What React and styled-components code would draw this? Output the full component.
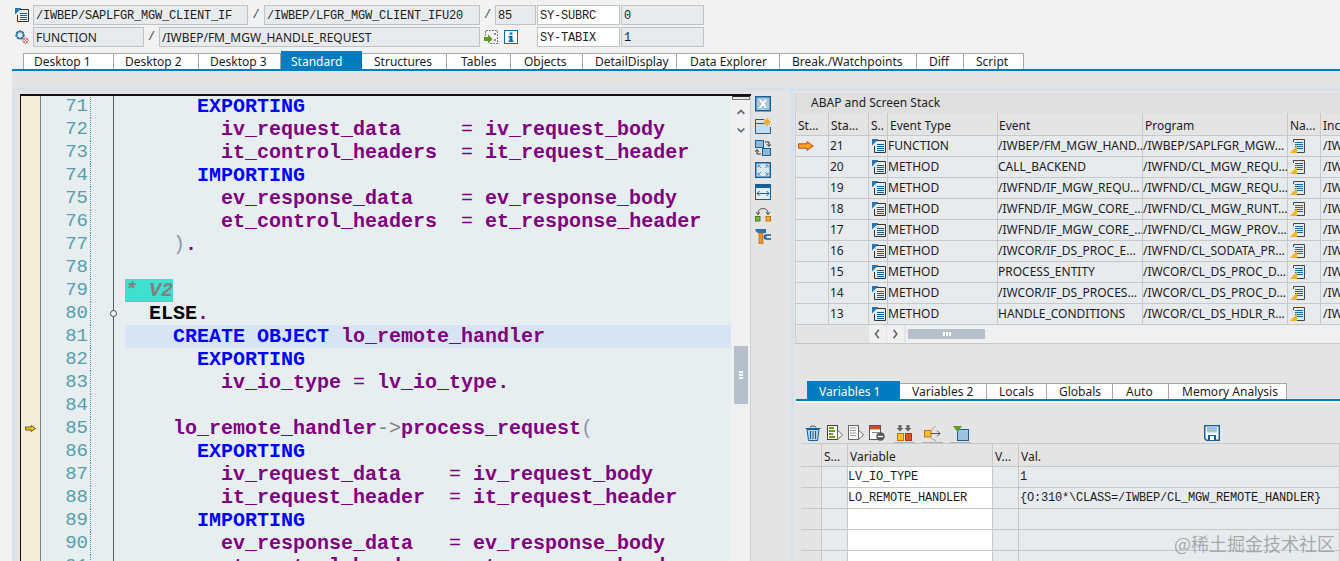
import React from 'react'
import styled, { createGlobalStyle } from 'styled-components'

const uiFont = '"Noto Sans", "Open Sans", sans-serif'
const monoFont = '"Liberation Mono", monospace'

const Global = createGlobalStyle`
  html, body {
    margin: 0;
    padding: 0;
    overflow: hidden;
    background: #f2f2f2;
  }
`

const Page = styled.div`
  position: relative;
  width: 1340px;
  height: 561px;
  overflow: hidden;
  background: #f2f2f2;
  font-family: ${uiFont};
  font-size: 12px;
  color: #1c1c1c;
`

const Header = styled.div`
  height: 48px;
  padding: 5px 0 0 14px;
  box-sizing: border-box;
  display: flex;
  flex-direction: column;
  gap: 2px;
`

const HeaderRow = styled.div`
  display: flex;
  align-items: center;
  height: 20px;
`

const IconSlot = styled.div`
  width: ${p => p.$w || 19}px;
  flex: none;
  box-sizing: border-box;
  padding-left: ${p => p.$pl || 0}px;
  display: flex;
  align-items: center;
`

const Field = styled.div`
  width: ${p => p.$w}px;
  height: 20px;
  flex: none;
  box-sizing: border-box;
  margin-right: ${p => p.$mr || 0}px;
  border: 1px solid #bfc3c6;
  background: ${p => (p.$white ? '#ffffff' : '#e8ebee')};
  padding-left: 2px;
  line-height: ${p => (p.$sans ? 19 : 20)}px;
  white-space: nowrap;
  overflow: hidden;
  font-family: ${p => (p.$sans ? uiFont : monoFont)};
  font-size: 12px;
  letter-spacing: ${p => (p.$sans ? 0 : -0.2)}px;
`

const Slash = styled.div`
  width: ${p => p.$w}px;
  flex: none;
  text-align: center;
  font-family: ${monoFont};
  color: #444;
`

const TabStrip = styled.div`
  height: 23px;
  margin-left: ${p => p.$ml}px;
  padding-left: ${p => p.$pl}px;
  display: flex;
  align-items: flex-end;
  border-bottom: 2px solid #007cc0;
  box-sizing: border-box;
  box-shadow: ${p => (p.$underline ? '0 2px 0 #ffffff' : 'none')};
`

const Tab = styled.div`
  width: ${p => p.$w}px;
  height: ${p => (p.$active ? 18 : 16)}px;
  flex: none;
  box-sizing: border-box;
  padding-left: ${p => p.$pad}px;
  line-height: ${p => (p.$active ? 21 : 16)}px;
  white-space: nowrap;
  background: ${p => (p.$active ? '#007cc0' : '#ffffff')};
  color: ${p => (p.$active ? '#ffffff' : '#1c1c1c')};
  border-top: ${p => (p.$active ? 'none' : '1px solid #a6a6a6')};
  border-right: ${p => (p.$active ? 'none' : '1px solid #a6a6a6')};
  border-left: ${p => (p.$first ? '1px solid #a6a6a6' : 'none')};
`

const Workspace = styled.div`
  margin-left: 12px;
  height: 490px;
  background: #e4e4e4;
  padding-top: 17px;
  box-sizing: border-box;
  display: flex;
`

const LeftPane = styled.div`
  width: 778px;
  flex: none;
  box-sizing: border-box;
  border-top: 3px solid #d6e1ec;
  border-left: 3px solid #d6e1ec;
  padding: 3px 0 0 5px;
  display: flex;
  overflow: hidden;
`

const Editor = styled.div`
  width: 731px;
  height: 470px;
  flex: none;
  box-sizing: border-box;
  border-top: 2px solid #111;
  border-left: 1px solid #111;
  display: flex;
  overflow: hidden;
`

const CodeArea = styled.div`
  width: 710px;
  flex: none;
  background: #e6eef0;
`

const Line = styled.div`
  display: flex;
  height: 23px;
  margin-top: ${p => (p.$first ? -1 : 0)}px;
`

const Marker = styled.div`
  width: 19px;
  flex: none;
  background: #f3ecd9;
  border-right: 1px solid #808080;
  display: flex;
  align-items: center;
  justify-content: center;
`

const LineNo = styled.div`
  width: 50px;
  height: 23px;
  flex: none;
  box-sizing: border-box;
  border-right: 1px dotted #3d9aa6;
  padding-right: 2px;
  text-align: right;
  font-family: ${monoFont};
  font-size: 19px;
  line-height: 23px;
  color: #559fae;
`

const Fold = styled.div`
  position: relative;
  width: 23px;
  flex: none;
  box-sizing: border-box;
  border-right: 1px solid #5a5a5a;
`

const FoldDot = styled.div`
  position: absolute;
  right: -4px;
  top: 8px;
  width: 5px;
  height: 5px;
  border: 1px solid #444;
  border-radius: 50%;
  background: #f3f6f7;
`

const Code = styled.pre`
  flex: 1;
  height: 23px;
  margin: 0 0 0 11px;
  background: ${p => (p.$current ? '#d8e4f3' : 'transparent')};
  font-family: ${monoFont};
  font-size: 20px;
  font-weight: bold;
  line-height: 23px;
`

const Tok = styled.span`
  color: ${p => p.$c};
  font-weight: ${p => (p.$light ? 'normal' : 'bold')};
`

const CommentTok = styled.span`
  display: inline-block;
  height: 23px;
  box-sizing: border-box;
  background: #40e0d0;
  border-bottom: 1px solid #7fb5ae;
  color: #808080;
  font-style: italic;
  line-height: 23px;
`

const ScrollCol = styled.div`
  position: relative;
  flex: 1;
  background: #f0f0f0;
  border-right: 1px solid #cfcfcf;
  display: flex;
  flex-direction: column;
  align-items: center;
`

const Grip = styled.div`
  width: 18px;
  height: 4px;
  flex: none;
  box-sizing: border-box;
  background: #e8e8e8;
  border: 1px solid #777;
  border-top-color: #222;
  margin-bottom: 4px;
`

const ArrowBtn = styled.div`
  height: 18px;
  display: flex;
  align-items: center;
  justify-content: center;
  color: #5d6a75;
`

const VThumb = styled.div`
  position: absolute;
  left: 3px;
  top: 250px;
  width: 14px;
  height: 58px;
  background: #b6c0cb;
  display: flex;
  flex-direction: column;
  align-items: center;
  justify-content: center;
  gap: 1px;
`

const GripDot = styled.i`
  width: 4px;
  height: 2px;
  background: #fff;
`

const ToolCol = styled.div`
  width: 39px;
  flex: none;
  padding: 0 0 0 4px;
  box-sizing: border-box;
  display: flex;
  flex-direction: column;
  gap: 6px;
  margin-top: 2px;
`

const ToolBtn = styled.div`
  width: 17px;
  height: 16px;
`

const RightPane = styled.div`
  flex: 1;
  min-width: 0;
  display: flex;
  flex-direction: column;
`

const StackPanel = styled.div`
  height: 277px;
  flex: none;
  box-sizing: border-box;
  border-left: 4px solid #d6e1ec;
  border-top: 3px solid #d6e1ec;
  padding: 2px 0 0 1px;
`

const StackFrame = styled.div`
  height: 250px;
  border-bottom: 1px solid #c6c6c6;
  border-left: 1px solid #d0d0d0;
  overflow: hidden;
  display: flex;
  flex-direction: column;
`

const PanelTitle = styled.div`
  height: 20px;
  flex: none;
  background: #dfdfdf;
  padding-left: 15px;
  line-height: 20px;
`

const GridRow = styled.div`
  display: grid;
  grid-template-columns: ${p => p.$cols};
  height: ${p => p.$h || 21}px;
  flex: none;
  box-sizing: border-box;
  border-bottom: 1px solid #c8c8c8;
  background: ${p => (p.$head ? '#e4e4e4' : '#e8ebee')};
`

const Cell = styled.div`
  box-sizing: border-box;
  min-width: 0;
  padding-left: ${p => p.$pad ?? 2}px;
  border-right: 1px solid #c8c8c8;
  white-space: nowrap;
  overflow: hidden;
  line-height: ${p => p.$lh || 20}px;
  background: ${p => p.$bg || 'transparent'};
  font-family: ${p => (p.$mono ? monoFont : uiFont)};
  font-size: 12px;
  letter-spacing: ${p => (p.$mono ? -0.2 : 0)}px;
  display: ${p => (p.$icon ? 'flex' : 'block')};
  align-items: center;
`

const HScrollRow = styled.div`
  flex: 1;
  display: flex;
  align-items: center;
  padding-left: 73px;
  gap: 1px;
`

const NavBtn = styled.div`
  width: 17px;
  height: 18px;
  background: #f0f0f0;
  display: flex;
  align-items: center;
  justify-content: center;
  color: #5d6a75;
`

const HTrack = styled.div`
  flex: 1;
  height: 18px;
  margin-left: 1px;
  background: #f0f0f0;
  display: flex;
  align-items: center;
  padding-left: 2px;
`

const HThumb = styled.div`
  width: 77px;
  height: 10px;
  background: #b6c0cb;
  display: flex;
  align-items: center;
  justify-content: center;
  gap: 1px;
`

const HGripDot = styled.i`
  width: 2px;
  height: 4px;
  background: #fff;
`

const VarPanel = styled.div`
  flex: 1;
  min-height: 0;
  box-sizing: border-box;
  border-left: 4px solid #d6e1ec;
  padding-top: 13px;
  position: relative;
`

const VarToolbar = styled.div`
  height: 43px;
  box-sizing: border-box;
  padding: 24px 0 0 4px;
  margin-left: 7px;
  display: flex;
  align-items: flex-start;
  border-bottom: 1px solid #c8c8c8;
`

const VarTool = styled.div`
  width: ${p => (p.$under ? 21 : 16)}px;
  height: ${p => (p.$under ? 18 : 16)}px;
  flex: none;
  box-sizing: border-box;
  margin-right: ${p => p.$mr ?? 5}px;
  border-bottom: ${p => (p.$under ? '1px solid #b0b0b0' : 'none')};
  display: flex;
  justify-content: center;
`

const VarTable = styled.div`
  margin-left: 7px;
  display: flex;
  flex-direction: column;
`

const Watermark = styled.div`
  position: absolute;
  right: 5px;
  bottom: 8px;
  font-family: "Noto Sans CJK SC", sans-serif;
  font-size: 18px;
  line-height: 20px;
  color: rgba(110, 110, 110, 0.55);
  white-space: nowrap;
`

const Svg = ({ size = 16, children }) => (
  <svg width={size} height={size} viewBox={`0 0 ${size} ${size}`} fill="none" style={{ display: 'block' }}>
    {children}
  </svg>
)

const ListDoc = () => (
  <Svg size={16}>
    <path d="M3.5 2.5H14.5V14.5H3.5V8" stroke="#333" />
    <path d="M1 1H7.5L1 7.5Z" fill="#2a74ad" />
    <path d="M6 6.5H13M6 8.5H13M6 10.5H13M6 12.5H13" stroke="#14609f" />
  </Svg>
)

const NavDoc = () => (
  <Svg size={15}>
    <path d="M3.5 3V0.5H14.5V13.5H7" stroke="#444" />
    <path d="M5 3.5H13M5 5.5H13M5 7.5H13M7 9.5H13" stroke="#1668ad" />
    <path d="M0 14L7 6.5V14Z" fill="#f5b324" />
  </Svg>
)

const GearDoc = () => (
  <Svg size={16}>
    <circle cx="6" cy="6" r="3.5" stroke="#2a74ad" strokeWidth="2.4" strokeDasharray="2 1" />
    <circle cx="6" cy="6" r="3.8" stroke="#2a74ad" />
    <circle cx="11.5" cy="11.5" r="2.6" fill="#fff" stroke="#d9534f" />
    <path d="M10.2 10.2L12.8 12.8M12.8 10.2L10.2 12.8" stroke="#d9534f" />
  </Svg>
)

const PasteArrow = () => (
  <Svg size={16}>
    <path d="M2.5 7V1.5H14.5V14.5H6" stroke="#777" strokeDasharray="2 1" />
    <path d="M1 8H5V5.5L9.5 10L5 14.5V12H1Z" fill="#5b9a20" />
    <path d="M11 5H13M11 11H13" stroke="#333" />
  </Svg>
)

const InfoBox = () => (
  <Svg size={16}>
    <rect x="1.5" y="1.5" width="13" height="13" stroke="#0a6db3" fill="#fff" />
    <path d="M6.5 3.5H9.5V5.5H6.5ZM5.5 7H9.5V11.5H10.5V13H5.5V11.5H6.5V8.5H5.5Z" fill="#0a6db3" />
  </Svg>
)

const CloseBox = () => (
  <Svg size={16}>
    <rect x="0.75" y="0.75" width="14.5" height="14" fill="#a9cbe4" stroke="#15609a" strokeWidth="1.5" />
    <path d="M3 3H6L8 5.5L10 3H13L10 7.7L13 12.5H10L8 10L6 12.5H3L6 7.7Z" fill="#fff" stroke="#5b97c4" strokeWidth="0.5" />
  </Svg>
)

const NewPane = () => (
  <Svg size={16}>
    <rect x="1" y="5" width="14" height="10" fill="#c6dcec" />
    <path d="M9 1.5H0.5V15.5H15.5V9" stroke="#15609a" />
    <path d="M1 5.5H9" stroke="#15609a" />
    <circle cx="12" cy="4" r="2.6" fill="#f7a51e" />
    <path d="M12 0V8M8 4H16M9.4 1.4L14.6 6.6M14.6 1.4L9.4 6.6" stroke="#f7a51e" />
  </Svg>
)

const SwapPanes = () => (
  <Svg size={16}>
    <rect x="0.5" y="0.5" width="8" height="7" fill="#8fb9d8" stroke="#15609a" />
    <rect x="7.5" y="8.5" width="8" height="7" fill="#8fb9d8" stroke="#15609a" />
    <path d="M10 2H14V6M12 4.2L14 6.5L16 4.2M6 14H2V10M0 11.8L2 9.5L4 11.8" stroke="#333" />
  </Svg>
)

const Fullscreen = () => (
  <Svg size={16}>
    <rect x="0.75" y="0.75" width="14.5" height="14.5" fill="#dbe9f3" stroke="#15609a" strokeWidth="1.5" />
    <path d="M3 5.5V3H5.5M3 3L6 6M13 5.5V3H10.5M13 3L10 6M3 10.5V13H5.5M3 13L6 10M13 10.5V13H10.5M13 13L10 10" stroke="#4f93c2" />
  </Svg>
)

const WidthPane = () => (
  <Svg size={16}>
    <rect x="0.5" y="0.5" width="15" height="15" fill="#e4eef6" stroke="#15609a" />
    <rect x="1" y="1" width="14" height="3" fill="#15609a" />
    <path d="M2 9.5H14M2 9.5L4.5 7M2 9.5L4.5 12M14 9.5L11.5 7M14 9.5L11.5 12" stroke="#15609a" />
  </Svg>
)

const Headset = () => (
  <Svg size={16}>
    <path d="M3 9V7C3 1 13 1 13 7V9" stroke="#555" />
    <path d="M1 6L3 8.5L5 6M11 6L13 8.5L15 6" stroke="#555" />
    <rect x="0.5" y="10.5" width="4.5" height="4.5" fill="#7cb342" stroke="#4b7d1e" />
    <rect x="11" y="10.5" width="4.5" height="4.5" fill="#f5b324" stroke="#d2691e" />
  </Svg>
)

const Tools = () => (
  <Svg size={16}>
    <path d="M0.5 1H11V5H3L0.5 3Z" fill="#2a74ad" />
    <rect x="4" y="5" width="4" height="11" fill="#f0932b" stroke="#a95f0e" strokeWidth="0.6" />
    <path d="M16 7H11.5C10 7 9.5 8 9.5 9S10 11 11.5 11H16" stroke="#15609a" strokeWidth="1.6" />
    <path d="M9 9H12" stroke="#15609a" />
  </Svg>
)

const Trash = () => (
  <Svg size={16}>
    <path d="M5 2.5C5 .5 11 .5 11 2.5M.5 3.5H15.5M2 4.5L3.5 15.5H12.5L14 4.5Z" stroke="#15609a" fill="#b5d2e8" />
    <path d="M5.5 6V14M8 6V14M10.5 6V14" stroke="#15609a" />
  </Svg>
)

const DocPlay = ({ tone }) => {
  const green = tone === 'green'
  return (
    <Svg size={16}>
      <rect x="0.5" y="0.5" width="10" height="14" fill="#fff" stroke={green ? '#444' : '#666'} />
      <path d={green ? 'M2 3H7M2 6H8M2 9H6M2 12H8' : 'M2 3H8M2 5.5H8M2 8H8M2 10.5H8'} stroke={green ? '#6a9f0b' : '#999'} strokeWidth={green ? 2 : 1} />
      <path d="M10.5 5L15.5 10L10.5 14.5Z" fill="#fff" stroke="#666" />
    </Svg>
  )
}

const RowMinus = () => (
  <Svg size={16}>
    <rect x="0.5" y="0.5" width="11" height="14" fill="#fff" stroke="#555" />
    <rect x="1" y="1" width="10" height="3.5" fill="#d14d1f" />
    <path d="M3 7.5H10" stroke="#888" />
    <circle cx="11.5" cy="11.5" r="4.2" fill="#555" />
    <path d="M9 11.5H14" stroke="#fff" strokeWidth="1.4" />
  </Svg>
)

const SplitBoxes = () => (
  <Svg size={17}>
    <path d="M2.5 0H5.5V3H7.5L4 6.5L.5 3H2.5ZM10.5 0H13.5V3H15.5L12 6.5L8.5 3H10.5Z" fill="#666" />
    <rect x="1.5" y="8.5" width="6" height="7" fill="#f7c325" stroke="#d2691e" />
    <rect x="9.5" y="8.5" width="6" height="7" fill="#d8531f" stroke="#a13a11" />
  </Svg>
)

const BoxArrow = () => (
  <Svg size={17}>
    <rect x="0.5" y="5.5" width="6.5" height="6.5" fill="#f7c325" stroke="#d2691e" />
    <path d="M7 5L12 1M7 13L12 16" stroke="#aaa" />
    <path d="M7 8.5H16M13 5.5L16 8.5L13 11.5" stroke="#555" />
  </Svg>
)

const FilterBox = () => (
  <Svg size={16}>
    <rect x="4.5" y="4.5" width="11" height="11" fill="#9fc3dd" stroke="#15609a" />
    <path d="M0 1H9L4.5 7Z" fill="#5f9f24" />
  </Svg>
)

const Save = () => (
  <Svg size={16}>
    <path d="M1 .75H15.25V15.25H2.5L.75 13.5V1Z" fill="#fff" stroke="#15609a" strokeWidth="1.5" />
    <rect x="3" y="1" width="10" height="6.5" fill="#9fc3dd" />
    <rect x="4" y="10" width="8" height="5" fill="#15609a" />
    <rect x="6" y="11" width="4" height="4" fill="#fff" />
  </Svg>
)

const CurrentArrow = ({ w = 16, h = 10, fill = '#f5a623', line = '#d2421f' }) => (
  <svg width={w} height={h} viewBox="0 0 16 10" style={{ display: 'block' }}>
    <path d="M.5 2.8H9V.6L15.3 5L9 9.4V7.2H.5Z" fill={fill} stroke={line} />
  </svg>
)

const Chevron = ({ dir }) => {
  const d = { up: 'M2 7L6 3L10 7', down: 'M2 3L6 7L10 3', left: 'M7 1L3 6L7 11', right: 'M3 1L7 6L3 11' }[dir]
  return (
    <svg width="10" height="12" viewBox="0 0 12 12" style={{ display: 'block' }}>
      <path d={d} fill="none" stroke="currentColor" strokeWidth="2" />
    </svg>
  )
}

// minimal ABAP colouring, uppercase words are keywords
const highlight = text =>
  text.split(/(->|\b[A-Z]+\b|[a-z_]+|[=.()])/).filter(Boolean).map((part, i) => {
    if (part === 'ELSE') return <Tok key={i} $c="#000">{part}</Tok>
    if (/^[A-Z]+$/.test(part)) return <Tok key={i} $c="#0000ff">{part}</Tok>
    if (part === '->') return <Tok key={i} $c="#808080" $light>{part}</Tok>
    if (part === '(' || part === ')') return <Tok key={i} $c="#8d99a8" $light>{part}</Tok>
    if (part === '=') return <Tok key={i} $c="#800080" $light>{part}</Tok>
    if (/^[a-z_.]+$/.test(part)) return <Tok key={i} $c="#800080">{part}</Tok>
    return part
  })

const codeLines = [
  [71, '      EXPORTING'],
  [72, '        iv_request_data     = iv_request_body'],
  [73, '        it_control_headers  = it_request_header'],
  [74, '      IMPORTING'],
  [75, '        ev_response_data    = ev_response_body'],
  [76, '        et_control_headers  = et_response_header'],
  [77, '    ).'],
  [78, ''],
  [79, null],
  [80, '  ELSE.'],
  [81, '    CREATE OBJECT lo_remote_handler'],
  [82, '      EXPORTING'],
  [83, '        iv_io_type = lv_io_type.'],
  [84, ''],
  [85, '    lo_remote_handler->process_request('],
  [86, '      EXPORTING'],
  [87, '        iv_request_data    = iv_request_body'],
  [88, '        it_request_header  = it_request_header'],
  [89, '      IMPORTING'],
  [90, '        ev_response_data   = ev_response_body'],
  [91, '        et_control_headers = et_response_header']
]

const topTabs = [
  ['Desktop 1', 91, 10], ['Desktop 2', 85, 11], ['Desktop 3', 82, 11], ['Standard', 81, 10, true], ['Structures', 85, 12],
  ['Tables', 64, 14], ['Objects', 72, 13], ['DetailDisplay', 94, 12], ['Data Explorer', 103, 13], ['Break./Watchpoints', 137, 12],
  ['Diff', 47, 12], ['Script', 60, 12]
]

const varTabs = [
  ['Variables 1', 93, 12, true], ['Variables 2', 87, 12], ['Locals', 60, 12], ['Globals', 66, 12], ['Auto', 56, 13], ['Memory Analysis', 118, 13]
]

const stackCols = '33px 40px 19px 110px 145px 145px 33px 40px'
const stackRows = [
  ['21', 'FUNCTION', '/IWBEP/FM_MGW_HAND…', '/IWBEP/SAPLFGR_MGW…', true],
  ['20', 'METHOD', 'CALL_BACKEND', '/IWFND/CL_MGW_REQU…'],
  ['19', 'METHOD', '/IWFND/IF_MGW_REQU…', '/IWFND/CL_MGW_REQU…'],
  ['18', 'METHOD', '/IWFND/IF_MGW_CORE_…', '/IWFND/CL_MGW_RUNT…'],
  ['17', 'METHOD', '/IWFND/IF_MGW_CORE_…', '/IWFND/CL_MGW_PROV…'],
  ['16', 'METHOD', '/IWCOR/IF_DS_PROC_E…', '/IWFND/CL_SODATA_PR…'],
  ['15', 'METHOD', 'PROCESS_ENTITY', '/IWCOR/CL_DS_PROC_D…'],
  ['14', 'METHOD', '/IWCOR/IF_DS_PROCES…', '/IWCOR/CL_DS_PROC_D…'],
  ['13', 'METHOD', 'HANDLE_CONDITIONS', '/IWCOR/CL_DS_HDLR_R…']
]

const varCols = '21px 26px 145px 26px 1fr'
const varRows = [
  ['LV_IO_TYPE', '1'],
  ['LO_REMOTE_HANDLER', '{O:310*\\CLASS=/IWBEP/CL_MGW_REMOTE_HANDLER}'],
  ['', ''],
  ['', ''],
  ['', '']
]

const toolIcons = [CloseBox, NewPane, SwapPanes, Fullscreen, WidthPane, Headset, Tools]

const App = () => (
  <Page>
    <Global />
    <Header>
      <HeaderRow>
        <IconSlot><ListDoc /></IconSlot>
        <Field $w={215}>/IWBEP/SAPLFGR_MGW_CLIENT_IF</Field>
        <Slash $w={16}>/</Slash>
        <Field $w={216}>/IWBEP/LFGR_MGW_CLIENT_IFU20</Field>
        <Slash $w={15}>/</Slash>
        <Field $w={41} $mr={1}>85</Field>
        <Field $w={83} $white $mr={1}>SY-SUBRC</Field>
        <Field $w={83}>0</Field>
      </HeaderRow>
      <HeaderRow>
        <IconSlot><GearDoc /></IconSlot>
        <Field $w={111} $sans>FUNCTION</Field>
        <Slash $w={15}>/</Slash>
        <Field $w={321} $sans>/IWBEP/FM_MGW_HANDLE_REQUEST</Field>
        <IconSlot $w={23} $pl={3}><PasteArrow /></IconSlot>
        <IconSlot $w={34}><InfoBox /></IconSlot>
        <Field $w={83} $white $mr={1}>SY-TABIX</Field>
        <Field $w={83}>1</Field>
      </HeaderRow>
    </Header>
    <TabStrip $ml={12} $pl={11}>
      {topTabs.map(([label, w, pad, active], i) => (
        <Tab key={label} $w={w} $pad={pad} $active={active} $first={i === 0}>{label}</Tab>
      ))}
    </TabStrip>
    <Workspace>
      <LeftPane>
        <Editor>
          <CodeArea>
            {codeLines.map(([no, text], i) => (
              <Line key={no} $first={i === 0}>
                <Marker>{no === 85 && <CurrentArrow w={11} h={9} fill="#f7c600" line="#222" />}</Marker>
                <LineNo>{no}</LineNo>
                <Fold>{no === 80 && <FoldDot />}</Fold>
                <Code $current={no === 81}>
                  {text === null ? <CommentTok>* V2</CommentTok> : highlight(text)}
                </Code>
              </Line>
            ))}
          </CodeArea>
          <ScrollCol>
            <Grip />
            <ArrowBtn><Chevron dir="up" /></ArrowBtn>
            <ArrowBtn><Chevron dir="down" /></ArrowBtn>
            <VThumb><GripDot /><GripDot /><GripDot /></VThumb>
          </ScrollCol>
        </Editor>
        <ToolCol>
          {toolIcons.map((Icon, i) => <ToolBtn key={i}><Icon /></ToolBtn>)}
        </ToolCol>
      </LeftPane>
      <RightPane>
        <StackPanel>
          <StackFrame>
            <PanelTitle>ABAP and Screen Stack</PanelTitle>
            <GridRow $cols={stackCols} $h={23} $head>
              <Cell $lh={25}>St...</Cell>
              <Cell $lh={25}>Sta...</Cell>
              <Cell $lh={25}>S..</Cell>
              <Cell $lh={25}>Event Type</Cell>
              <Cell $lh={25} $pad={1}>Event</Cell>
              <Cell $lh={25}>Program</Cell>
              <Cell $lh={25}>Na...</Cell>
              <Cell $lh={25}>Inc</Cell>
            </GridRow>
            {stackRows.map(([no, type, event, program, current]) => (
              <GridRow key={no} $cols={stackCols}>
                <Cell $icon $pad={2}>{current && <CurrentArrow />}</Cell>
                <Cell $pad={1}>{no}</Cell>
                <Cell $icon $pad={2}><ListDoc /></Cell>
                <Cell $pad={0}>{type}</Cell>
                <Cell $pad={0}>{event}</Cell>
                <Cell $pad={0}>{program}</Cell>
                <Cell $icon $pad={2}><NavDoc /></Cell>
                <Cell>/IW</Cell>
              </GridRow>
            ))}
            <HScrollRow>
              <NavBtn><Chevron dir="left" /></NavBtn>
              <NavBtn><Chevron dir="right" /></NavBtn>
              <HTrack>
                <HThumb><HGripDot /><HGripDot /><HGripDot /></HThumb>
              </HTrack>
            </HScrollRow>
          </StackFrame>
        </StackPanel>
        <VarPanel>
          <TabStrip $ml={2} $pl={11} $underline>
            {varTabs.map(([label, w, pad, active]) => (
              <Tab key={label} $w={w} $pad={pad} $active={active}>{label}</Tab>
            ))}
          </TabStrip>
          <VarToolbar>
            <VarTool $mr={6}><Trash /></VarTool>
            <VarTool><DocPlay tone="green" /></VarTool>
            <VarTool><DocPlay /></VarTool>
            <VarTool $mr={9}><RowMinus /></VarTool>
            <VarTool $under $mr={7}><SplitBoxes /></VarTool>
            <VarTool $under $mr={7}><BoxArrow /></VarTool>
            <VarTool $under $mr={233}><FilterBox /></VarTool>
            <VarTool><Save /></VarTool>
          </VarToolbar>
          <VarTable>
            <GridRow $cols={varCols} $h={23} $head>
              <Cell />
              <Cell $lh={25}>S...</Cell>
              <Cell $lh={25}>Variable</Cell>
              <Cell $lh={25}>V...</Cell>
              <Cell $lh={25}>Val.</Cell>
            </GridRow>
            {varRows.map(([name, value], i) => (
              <GridRow key={i} $cols={varCols}>
                <Cell $bg="#e4e4e4" />
                <Cell />
                <Cell $bg="#ffffff" $mono $pad={0} $lh={21}>{name}</Cell>
                <Cell />
                <Cell $mono $pad={1} $lh={21}>{value}</Cell>
              </GridRow>
            ))}
          </VarTable>
          <Watermark>@稀土掘金技术社区</Watermark>
        </VarPanel>
      </RightPane>
    </Workspace>
  </Page>
)

export default App
